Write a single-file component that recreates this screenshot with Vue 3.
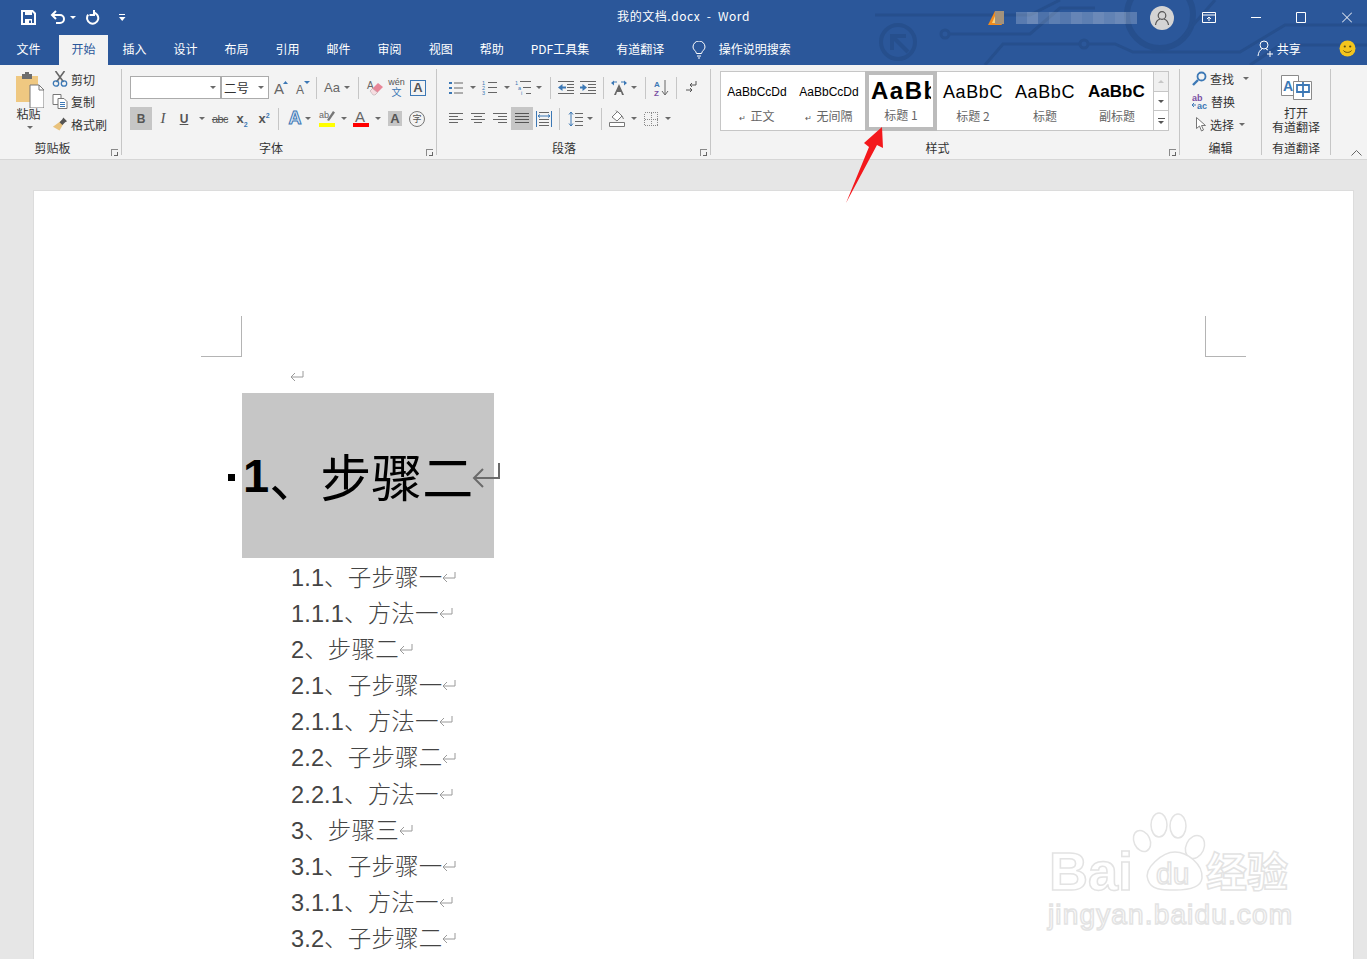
<script setup>
const tabs = ['插入', '设计', '布局', '引用', '邮件', '审阅', '视图', '帮助', 'PDF工具集', '有道翻译']
const lines = ['1.1、子步骤一', '1.1.1、方法一', '2、步骤二', '2.1、子步骤一', '2.1.1、方法一', '2.2、子步骤二', '2.2.1、方法一', '3、步骤三', '3.1、子步骤一', '3.1.1、方法一', '3.2、子步骤二']
const mosaic = [0.22, 0.3, 0.16, 0.24, 0.2, 0.28, 0.24, 0.3, 0.26, 0.3, 0.22]
</script>

<template>
  <div class="app">
    <header class="top">
      <svg class="circuit" width="1367" height="65" viewBox="0 0 1367 65" fill="none" stroke="#264f8d" stroke-width="3">
        <path d="M875 15H1030L1060 0" />
        <circle cx="898" cy="42" r="17" stroke-width="4" />
        <path d="M892 50V36H906M892 36L908 52" stroke-width="4" />
        <circle cx="945" cy="34" r="4" />
        <path d="M949 34H1030L1060 8H1095" />
        <path d="M985 65L1003 44H1080" />
        <circle cx="1084" cy="44" r="4" />
        <path d="M1088 44H1115L1133 52H1240L1285 25H1367" />
        <circle cx="1160" cy="15" r="33" stroke-width="6" />
        <path d="M1180 40L1215 0M1250 65L1280 45H1367" />
      </svg>
      <div class="title-row">
        <div class="qat">
          <svg width="15" height="15" viewBox="0 0 15 15"><path d="M1 1h10.500L14 3.500V14H1z" fill="none" stroke="#fff" stroke-width="2" /><path d="M4 1h7v4H4zM4 9h7v5H4z" fill="#fff" /><path d="M8 10.500h2v2.500H8z" fill="#2b579a" /></svg>
          <svg class="m14" width="16" height="15" viewBox="0 0 16 15" fill="none" stroke="#fff" stroke-width="2"><path d="M2 5h8a4 4 0 0 1 0 8H6" /><path d="M6 1L2 5l4 4" /></svg>
          <i class="caret white m4"></i>
          <svg class="m10" width="15" height="15" viewBox="0 0 15 15" fill="none" stroke="#fff" stroke-width="2"><path d="M7 2.500a5.600 5.600 0 1 1-4.800 2.200" /><path d="M8 0v5H3.500" /></svg>
          <svg class="m18" width="7" height="8" viewBox="0 0 7 8" fill="#fff"><path d="M0 0h6v1H0zM0 3h6.500L3.200 7z" /></svg>
        </div>
        <div class="doc-title">我的文档.docx&nbsp; -&nbsp; Word</div>
        <div class="win">
          <svg width="16" height="16" viewBox="0 0 16 16"><path d="M8 1L15 15H1z" fill="#f08a1d" /><path d="M8 6L11 13H5z" fill="#f9d27a" /></svg>
          <i class="warm"></i>
          <div class="mosaic"><i v-for="(m, i) in mosaic" :key="i" :style="{ opacity: m }"></i></div>
          <div class="avatar">
            <svg width="16" height="16" viewBox="0 0 16 16" fill="none" stroke="#555" stroke-width="1.200"><circle cx="8" cy="5.500" r="3.800" /><path d="M1.500 15c.5-4 3-5.500 4.500-6M14.500 15c-.5-4-3-5.500-4.500-6" /></svg>
          </div>
          <svg class="m28" width="14" height="11" viewBox="0 0 14 11" fill="none" stroke="#fff"><path d="M.5.500h13v10H.5zM.5 3h13M7 9V5M5 7l2-2 2 2" /></svg>
          <svg class="m35" width="10" height="11" viewBox="0 0 10 11" stroke="#fff"><path d="M0 5.500h10" /></svg>
          <svg class="m35" width="10" height="11" viewBox="0 0 10 11" fill="none" stroke="#fff"><path d="M.5.500h9v10h-9z" /></svg>
          <svg class="m36" width="10" height="11" viewBox="0 0 10 11" fill="none" stroke="#fff"><path d="M0 .500l10 10M10 .500l-10 10" /></svg>
        </div>
      </div>
      <nav class="tab-row">
        <span class="tab">文件</span>
        <span class="tab active">开始</span>
        <span v-for="t in tabs" :key="t" class="tab">{{ t }}</span>
        <svg class="bulb" width="14" height="18" viewBox="0 0 14 18" fill="none" stroke="#fff"><path d="M4.500 12.500C4 9.500 1 9 1 6a6 6 0 0 1 12 0c0 3-3 3.500-3.500 6.500zM5 15h4M6 17h2" /></svg>
        <span class="search">操作说明搜索</span>
        <span class="share">
          <svg width="17" height="17" viewBox="0 0 17 17" fill="none" stroke="#fff"><circle cx="7" cy="5" r="4" /><path d="M1 16c.5-4 2-6 4-7M9 9l2 1M10 14h6M13 11v6" /></svg>
          共享
        </span>
        <svg class="smile" width="17" height="17" viewBox="0 0 17 17"><circle cx="8.500" cy="8.500" r="8" fill="#f4c51d" /><circle cx="5.800" cy="6.500" r="1.100" fill="#5b4a10" /><circle cx="11.200" cy="6.500" r="1.100" fill="#5b4a10" /><path d="M4.500 10.500c1.500 2.500 6.500 2.500 8 0" fill="none" stroke="#5b4a10" /></svg>
      </nav>
    </header>

    <section class="ribbon">
      <div class="group g-clip">
        <div class="body clip-body">
          <div class="paste">
            <svg width="29" height="36" viewBox="0 0 29 36"><path d="M1 4h22v26H1z" fill="#efc881" /><path d="M7 2h10v5H7z" fill="#6d6d6d" /><path d="M10 0h4v3h-4z" fill="#6d6d6d" /><path d="M15 13h9l5 5v18H15z" fill="#fff" stroke="#777" /><path d="M24 13v5h5" fill="none" stroke="#777" /></svg>
            <span class="paste-text">粘贴</span>
            <i class="caret"></i>
          </div>
          <div class="small-col">
            <div class="small">
              <svg width="15" height="16" viewBox="0 0 15 16" fill="none"><path d="M3 0l8 11M12 0L4 11" stroke="#666" stroke-width="1.600" /><circle cx="3.500" cy="12.500" r="2.700" stroke="#3c78b5" stroke-width="1.300" /><circle cx="11.500" cy="12.500" r="2.700" stroke="#3c78b5" stroke-width="1.300" /></svg>
              <span>剪切</span>
            </div>
            <div class="small">
              <svg width="15" height="15" viewBox="0 0 15 15" fill="#fff" stroke="#777"><path d="M.5.500h8v10h-8z" /><path d="M5.500 4.500h6l3 3v7h-9z" /><path d="M7.500 8.500h5M7.500 10.500h5M7.500 12.500h5" stroke="#3c78b5" /></svg>
              <span>复制</span>
            </div>
            <div class="small">
              <svg width="17" height="15" viewBox="0 0 17 15"><path d="M9 4l3 3-4 7-7-4z" fill="#e9c27c" /><path d="M8 5l3-3 1-2 4 4-2 1-3 3z" fill="#555" /></svg>
              <span>格式刷</span>
            </div>
          </div>
        </div>
        <div class="label">剪贴板<i class="launch"></i></div>
      </div>

      <div class="group g-font">
        <div class="body stack">
          <div class="row">
            <div class="combo font-name"><i class="caret"></i></div>
            <div class="combo font-size"><span>二号</span><i class="caret"></i></div>
            <svg class="m5 vis" width="15" height="16" viewBox="0 0 15 16"><text x="0" y="14" class="icn-t big">A</text><path d="M9 4l2.500-3L14 4z" fill="#3c78b5" /></svg>
            <svg class="m7 vis" width="15" height="16" viewBox="0 0 15 16"><text x="0" y="14" class="icn-t mid">A</text><path d="M8 1h6l-3 3z" fill="#3c78b5" /></svg>
            <i class="vdiv m5"></i>
            <span class="aa m7">Aa</span>
            <i class="caret m2"></i>
            <i class="vdiv m8"></i>
            <svg class="m8 vis" width="16" height="16" viewBox="0 0 16 16"><text x="0" y="9" class="icn-t eras">A</text><path d="M3 11L11 3l5 4-8 8z" fill="#e88698" /><path d="M3 11l2.500-2.500 5 4L8 15H6z" fill="#f7dde1" stroke="#aaa" stroke-width=".5" /></svg>
            <span class="wen m5"><small>wén</small><b>文</b></span>
            <span class="abox m5">A</span>
          </div>
          <div class="row">
            <span class="press bold">B</span>
            <span class="fmt italic m4">I</span>
            <span class="fmt under m7">U</span>
            <i class="caret m8"></i>
            <span class="fmt strike m6">abc</span>
            <span class="fmt script m6">x<sub>2</sub></span>
            <span class="fmt script m8">x<sup>2</sup></span>
            <i class="vdiv m7"></i>
            <span class="effect m8">A</span>
            <i class="caret m2"></i>
            <svg class="m8 vis" width="16" height="19" viewBox="0 0 16 19"><path d="M8 11L14 2l2 1.500L10 12z" fill="#777" /><text x="0" y="9" class="icn-t tiny2">ab</text><path d="M0 14h16v4H0z" fill="#ff0" /></svg>
            <i class="caret m6"></i>
            <svg class="m6 vis" width="16" height="19" viewBox="0 0 16 19"><text x="2" y="13" class="icn-t big">A</text><path d="M0 14h16v4H0z" fill="#f00" /></svg>
            <i class="caret m6"></i>
            <span class="shade m7">A</span>
            <span class="circled m7">字</span>
          </div>
        </div>
        <div class="label">字体<i class="launch"></i></div>
      </div>

      <div class="group g-para">
        <div class="body stack">
          <div class="row">
            <svg width="14" height="14" viewBox="0 0 14 14" stroke="#666"><path d="M5 2h9M5 7h9M5 12h9" /><path d="M0 1h3v2H0zM0 6h3v2H0zM0 11h3v2H0z" fill="#3c78b5" stroke="none" /></svg>
            <i class="caret m7"></i>
            <svg class="m6 vis" width="15" height="15" viewBox="0 0 15 15" stroke="#666"><path d="M6 2.500h9M6 7.500h9M6 12.500h9" /><text x="0" y="5" class="num">1</text><text x="0" y="10" class="num">2</text><text x="0" y="15" class="num">3</text></svg>
            <i class="caret m7"></i>
            <svg class="m5 vis" width="16" height="16" viewBox="0 0 16 16" stroke="#666"><path d="M5 1.500h11M8 7.500h8M11 13.500h5" /><text x="0" y="5" class="num">1</text><text x="3" y="10" class="num">a</text><text x="6" y="15" class="num">i</text></svg>
            <i class="caret m5"></i>
            <i class="vdiv m8"></i>
            <svg class="m7" width="16" height="14" viewBox="0 0 16 14" stroke="#666"><path d="M0 .500h16M9 3.500h7M9 6.500h7M9 9.500h7M0 12.500h16" /><path d="M0 6.500L4.500 3v7z" fill="#3c78b5" stroke="none" /><path d="M4 5.500h4v2H4z" fill="#3c78b5" stroke="none" /></svg>
            <svg class="m6" width="16" height="14" viewBox="0 0 16 14" stroke="#666"><path d="M0 .500h16M8 3.500h8M8 6.500h8M8 9.500h8M0 12.500h16" /><path d="M7 6.500L2.500 3v7z" fill="#3c78b5" stroke="none" /><path d="M0 5.500h3v2H0z" fill="#3c78b5" stroke="none" /></svg>
            <i class="vdiv m7"></i>
            <svg class="m7" width="16" height="15" viewBox="0 0 16 15"><path d="M3 15L8 4l5 11h-2l-1-3H6l-1 3z" fill="#666" /><path d="M0 3l3-2.500v5zM16 3l-3-2.500v5z" fill="#3c78b5" /><path d="M3 2h3M10 2h3" stroke="#3c78b5" /></svg>
            <i class="caret m4"></i>
            <i class="vdiv m8"></i>
            <svg class="m8 vis" width="14" height="16" viewBox="0 0 14 16"><text x="0" y="7" class="az a">A</text><text x="0" y="16" class="az z">Z</text><path d="M11 0v14M8 11l3 4 3-4" fill="none" stroke="#666" /></svg>
            <i class="vdiv m8"></i>
            <svg class="m9" width="11" height="13" viewBox="0 0 11 13" fill="none" stroke="#555"><path d="M10 0v4H4M6 2L4 4l2 2M0 9h6M4 7l2 2-2 2" /></svg>
          </div>
          <div class="row">
            <svg width="14" height="13" viewBox="0 0 14 13" stroke="#666"><path d="M0 1.500h14M0 4.500h9M0 7.500h14M0 10.500h9" /></svg>
            <svg class="m8" width="14" height="13" viewBox="0 0 14 13" stroke="#666"><path d="M0 1.500h14M3 4.500h8M0 7.500h14M3 10.500h8" /></svg>
            <svg class="m8" width="14" height="13" viewBox="0 0 14 13" stroke="#666"><path d="M0 1.500h14M5 4.500h9M0 7.500h14M5 10.500h9" /></svg>
            <span class="press m4">
              <svg width="14" height="13" viewBox="0 0 14 13" stroke="#555"><path d="M0 1.500h14M0 4.500h14M0 7.500h14M0 10.500h14" /></svg>
            </span>
            <svg class="m3" width="16" height="16" viewBox="0 0 16 16" fill="none" stroke="#666"><path d="M.500 0v16M15.500 0v16" stroke="#3c78b5" /><path d="M3 1.500h10M3 8.500h10M3 11.500h10M3 14.500h10" /><path d="M2 5h12M4 3.500L2 5l2 1.500M12 3.500L14 5l-2 1.500" stroke="#3c78b5" /></svg>
            <i class="vdiv m7"></i>
            <svg class="m8" width="15" height="16" viewBox="0 0 15 16" fill="none" stroke="#666"><path d="M7 2.500h8M7 6.500h8M7 10.500h8M7 14.500h8" /><path d="M3 1v14M1 3.500L3 1l2 2.500M1 12.500L3 15l2-2.500" stroke="#3c78b5" /></svg>
            <i class="caret m4"></i>
            <i class="vdiv m8"></i>
            <svg class="m7" width="16" height="17" viewBox="0 0 16 17" fill="none" stroke="#777"><path d="M3 7l5.500-5.500 4.500 4.500L8 11z" fill="#fff" /><path d="M7 .500l2 2M13 6l1.500 3" /><path d="M.500 12.500h15v4H.500z" fill="#fff" /></svg>
            <i class="caret m6"></i>
            <svg class="m7" width="14" height="14" viewBox="0 0 14 14" fill="none" stroke="#8a8a8a" stroke-dasharray="1 1" shape-rendering="crispEdges"><path d="M.500.500h13v13H.500zM7.500.500v13M.500 7.500h13" /></svg>
            <i class="caret m7"></i>
          </div>
        </div>
        <div class="label">段落<i class="launch"></i></div>
      </div>

      <div class="group g-style">
        <div class="body gallery-wrap">
          <div class="gallery">
            <div class="st"><span class="s-sample s-normal">AaBbCcDd</span><span class="s-name"><em>↵</em>正文</span></div>
            <div class="st"><span class="s-sample s-normal">AaBbCcDd</span><span class="s-name"><em>↵</em>无间隔</span></div>
            <div class="st sel"><span class="s-sample s-h1">AaBb</span><span class="s-name">标题 1</span></div>
            <div class="st"><span class="s-sample s-h2">AaBbC</span><span class="s-name">标题 2</span></div>
            <div class="st"><span class="s-sample s-h2">AaBbC</span><span class="s-name">标题</span></div>
            <div class="st"><span class="s-sample s-sub">AaBbC</span><span class="s-name">副标题</span></div>
            <div class="scroller">
              <span class="up"><i class="caret-up"></i></span>
              <span><i class="caret dark"></i></span>
              <span class="more"><i class="bar"></i><i class="caret dark"></i></span>
            </div>
          </div>
        </div>
        <div class="label">样式<i class="launch"></i></div>
      </div>

      <div class="group g-edit">
        <div class="body edit-col">
          <div class="small">
            <svg width="15" height="15" viewBox="0 0 15 15" fill="none"><circle cx="9.500" cy="5.500" r="4" stroke="#3c78b5" stroke-width="1.800" /><path d="M6 9l-5 5" stroke="#3c78b5" stroke-width="2.400" /></svg>
            <span>查找</span><i class="caret m6"></i>
          </div>
          <div class="small">
            <svg class="vis" width="16" height="15" viewBox="0 0 16 15"><text x="0" y="7" class="rep ab">ab</text><text x="5" y="15" class="rep ac">ac</text><path d="M0 11h4M2 9l-2 2 2 2" fill="none" stroke="#3c78b5" /></svg>
            <span>替换</span>
          </div>
          <div class="small pick">
            <svg width="11" height="15" viewBox="0 0 11 15"><path d="M.500.500v11l3-2.500 2 5 2-1-2-4.500h4z" fill="#fff" stroke="#777" /></svg>
            <span>选择</span><i class="caret m2"></i>
          </div>
        </div>
        <div class="label">编辑</div>
      </div>

      <div class="group g-you">
        <div class="body you-body">
          <svg width="31" height="26" viewBox="0 0 31 26"><path d="M.500.500h17v20H.500z" fill="#fff" stroke="#8a8a8a" /><path d="M12.500 6.500h18v18h-18z" fill="#fff" stroke="#8a8a8a" /><text x="2" y="16" class="you-a">A</text><path d="M16 10h12v7H16zM22 7v15" fill="none" stroke="#3c78b5" stroke-width="1.800" /></svg>
          <span>打开</span>
          <span>有道翻译</span>
        </div>
        <div class="label">有道翻译</div>
      </div>
      <svg class="collapse" width="11" height="6" viewBox="0 0 11 6" fill="none" stroke="#666"><path d="M.500 5.500l5-5 5 5" /></svg>
    </section>

    <main class="workspace">
      <article class="page">
        <div class="crops"><i class="crop left"></i><i class="crop right"></i></div>
        <svg class="ret first" width="14" height="12" viewBox="0 0 14 12" fill="none" stroke="#9a9a9a"><path d="M13 0v6H1M5 2L1 6l4 4" /></svg>
        <div class="heading-line">
          <i class="mark"></i>
          <div class="heading-box">
            <span class="h-num">1</span><span class="h-cjk">、步骤二</span>
            <svg class="h-ret" width="28" height="27" viewBox="0 0 28 27" fill="none" stroke="#6b6b6b" stroke-width="2"><path d="M27 0v15H2M11 6l-9 9 9 9" /></svg>
          </div>
        </div>
        <div class="list">
          <div v-for="(l, i) in lines" :key="i" class="li">{{ l }}<svg width="14" height="12" viewBox="0 0 14 12" fill="none" stroke="#9a9a9a"><path d="M13 0v6H1M5 2L1 6l4 4" /></svg></div>
        </div>
      </article>
      <svg class="watermark" width="260" height="130" viewBox="1040 805 260 130" fill="#fff" stroke="#e3e3e3" stroke-width="1.500">
        <ellipse cx="1142" cy="841" rx="8" ry="11" transform="rotate(-25 1142 841)" />
        <ellipse cx="1159" cy="825" rx="8" ry="12" />
        <ellipse cx="1178" cy="826" rx="8" ry="12" />
        <ellipse cx="1195" cy="847" rx="9" ry="12" transform="rotate(25 1195 847)" />
        <path d="M1148 880c-5-12 15-28 27-28s28 12 27 26c-1 10-14 12-27 12s-24 0-27-10z" />
        <text x="1049" y="890" class="wm-bai">Bai</text>
        <text x="1156" y="884" class="wm-du">du</text>
        <text x="1206" y="887" class="wm-cn">经验</text>
        <text x="1048" y="924" class="wm-url" textLength="244">jingyan.baidu.com</text>
      </svg>
    </main>

    <svg class="arrow" width="40" height="80" viewBox="845 125 40 80"><path d="M846 203L869 147L864 143L882 127L883 148L877 145Z" fill="#f3181c" /></svg>
  </div>
</template>

<style>
html, body { margin: 0; padding: 0; }
</style>

<style scoped>
.app {
  position: relative;
  width: 1367px;
  height: 959px;
  overflow: hidden;
  background: #e6e6e6;
  font-family: "Noto Sans CJK SC", "Liberation Sans", sans-serif;
  font-size: 12px;
  color: #333;
}
i { display: block; font-style: normal; flex: none; }
svg { display: block; flex: none; }
.vis { overflow: visible; }

.m2 { margin-left: 2px; } .m3 { margin-left: 3px; } .m4 { margin-left: 4px; }
.m5 { margin-left: 5px; } .m6 { margin-left: 6px; } .m7 { margin-left: 7px; }
.m8 { margin-left: 8px; } .m9 { margin-left: 9px; } .m10 { margin-left: 10px; }
.m14 { margin-left: 14px; } .m18 { margin-left: 18px; } .m28 { margin-left: 28px; }
.m35 { margin-left: 35px; } .m36 { margin-left: 36px; }

.caret { width: 0; height: 0; border-style: solid; border-width: 3px 3px 0; border-color: #6a6a6a transparent transparent; }
.caret.white { border-top-color: #fff; }
.caret.dark { border-top-color: #555; }
.vdiv { width: 1px; height: 22px; background: #c6c6c6; }

/* Top */
.top { position: relative; height: 65px; background: #2b579a; color: #fff; overflow: hidden; }
.circuit { position: absolute; left: 0; top: 0; }
.title-row { position: relative; height: 35px; display: grid; grid-template-columns: 1fr auto 1fr; align-items: center; }
.qat { display: flex; align-items: center; padding-left: 21px; }
.doc-title { font-size: 12px; line-height: 31px; height: 35px; letter-spacing: .55px; }
.win { display: flex; align-items: center; justify-content: flex-end; padding-right: 15px; }
.warm { width: 9px; height: 13px; background: #a3927c; margin-left: -8px; }
.mosaic { display: flex; margin-left: 12px; margin-right: 13px; }
.mosaic i { width: 11px; height: 12px; background: #fff; }
.avatar { width: 24px; height: 24px; border-radius: 50%; background: #d4d4d4; display: flex; align-items: center; justify-content: center; }
.tab-row { position: relative; height: 30px; display: flex; align-items: stretch; padding-left: 3px; }
.tab { padding: 0 13.500px; line-height: 27px; white-space: nowrap; }
.tab.active { background: #f3f3f3; color: #2b579a; margin-left: 5px; padding: 0 12.500px; margin-right: 1px; }
.bulb { margin-left: 14px; margin-top: 6px; }
.search { margin-left: 13px; line-height: 27px; }
.share { display: flex; align-items: center; gap: 3px; margin-left: 466px; height: 27px; }
.smile { margin-left: 38px; margin-top: 5px; }

/* Ribbon */
.ribbon { position: relative; height: 94px; background: #f3f3f3; border-bottom: 1px solid #d6d6d6; display: flex; align-items: flex-start; }
.group { box-sizing: border-box; height: 86px; margin-top: 4px; border-right: 1px solid #c6c6c6; display: flex; flex-direction: column; position: relative; }
.body { height: 72px; box-sizing: border-box; }
.label { height: 14px; line-height: 14px; text-align: center; color: #333; position: relative; padding-top: 1px; }
.g-clip .label { padding-right: 16px; }
.g-font .label { padding-right: 24px; }
.g-para .label { padding-right: 31px; }
.g-style .label { padding-right: 24px; }
.launch { position: absolute; right: 3px; bottom: -1px; width: 6px; height: 6px; border-left: 1px solid #8a8a8a; border-top: 1px solid #8a8a8a; }
.launch::after { content: ""; position: absolute; right: 0; bottom: 0; width: 3px; height: 3px; border-right: 1px solid #666; border-bottom: 1px solid #666; }
.stack { padding-top: 7px; display: flex; flex-direction: column; gap: 8px; }
.row { height: 23px; display: flex; align-items: center; }

.g-clip { width: 122px; }
.clip-body { display: flex; padding-left: 15px; padding-top: 3px; }
.paste { width: 29px; display: flex; flex-direction: column; align-items: center; }
.paste-text { line-height: 14px; margin-top: -1px; margin-left: -2px; }
.paste .caret { margin-top: 5px; }
.small-col { margin-left: 8px; margin-top: -2px; display: flex; flex-direction: column; gap: 4.500px; }
.small-col svg { width: 16px; }
.small { height: 18px; display: flex; align-items: center; gap: 3px; white-space: nowrap; }

.g-font { width: 315px; padding-left: 8px; }
.combo { box-sizing: border-box; height: 23px; border: 1px solid #ababab; background: #fff; display: flex; align-items: center; justify-content: flex-end; padding-right: 4px; }
.font-name { width: 91px; }
.font-size { width: 48px; margin-left: 0; justify-content: space-between; padding-left: 2px; font-size: 12.500px; }
.aa { width: 18px; font: 13px "Liberation Sans", sans-serif; color: #666; }
.wen { width: 17px; display: flex; flex-direction: column; align-items: center; line-height: 10px; font-size: 9px; }
.wen small { font: 9px/9px "Liberation Sans", sans-serif; color: #555; }
.wen b { font-weight: 400; color: #3c78b5; font-size: 10px; line-height: 10px; }
.abox { box-sizing: border-box; width: 16px; height: 16px; border: 1px solid #3c78b5; font: bold 13px/14px "Liberation Sans", sans-serif; color: #555; text-align: center; }
.press { box-sizing: border-box; width: 22px; height: 23px; background: #c6c6c6; display: flex; align-items: center; justify-content: center; }
.bold { font: bold 12px "Liberation Sans", sans-serif; color: #555; }
.fmt { font: 12px "Liberation Sans", sans-serif; color: #555; text-align: center; font-weight: bold; }
.italic { width: 14px; font: italic 15px "Liberation Serif", serif; }
.under { width: 14px; text-decoration: underline; }
.strike { width: 18px; text-decoration: line-through; font-weight: 400; font-size: 11px; letter-spacing: -.5px; }
.script { width: 14px; font-size: 13px; line-height: 14px; }
.script sub, .script sup { font-size: 7px; color: #3c78b5; line-height: 0; }
.effect { width: 16px; font: bold 18px "Liberation Sans", sans-serif; color: #dbe8f5; -webkit-text-stroke: 1px #3c78b5; text-align: center; }
.shade { width: 14px; height: 15px; background: #c6c6c6; color: #555; font: bold 13px/15px "Liberation Sans", sans-serif; text-align: center; }
.circled { box-sizing: border-box; width: 16px; height: 16px; border: 1px solid #777; border-radius: 50%; font-size: 9px; line-height: 13px; text-align: center; color: #555; }

.icn-t { font-family: "Liberation Sans", sans-serif; fill: #666; }
.big { font-size: 15px; }
.mid { font-size: 12px; }
.eras { font-size: 10px; }
.tiny2 { font-size: 9px; }
.num { font: 5.500px "Liberation Sans", sans-serif; fill: #3c78b5; stroke: none; }
.az { font: bold 8px "Liberation Sans", sans-serif; }
.az.a { fill: #3c78b5; }
.az.z { fill: #7a4fa3; }

.g-para { width: 274px; padding-left: 12px; }
.g-style { width: 469px; padding-left: 9px; }
.gallery-wrap { padding-top: 2px; }
.gallery { box-sizing: border-box; width: 449px; height: 60px; border: 1px solid #c6c6c6; background: #fff; display: flex; }
.st { width: 72px; display: flex; flex-direction: column; align-items: center; overflow: hidden; flex: none; box-sizing: border-box; padding-top: 5px; }
.st.sel { margin: -1px 0; height: 60px; width: 72px; border: 4px solid #bcbcbc; background: #fff; padding-top: 1px; }
.s-sample { height: 29px; line-height: 30px; color: #000; font-family: "Liberation Sans", sans-serif; white-space: nowrap; }
.s-normal { font-size: 12px; }
.s-h1 { font-size: 24px; font-weight: bold; letter-spacing: 1.500px; width: 60px; overflow: hidden; }
.s-h2 { font-size: 18px; letter-spacing: .6px; }
.s-sub { font-size: 17px; font-weight: bold; width: 58px; overflow: hidden; }
.s-name { line-height: 20px; color: #666; white-space: nowrap; }
.s-name em { font-style: normal; font-size: 8px; margin-right: 4px; color: #555; }
.scroller { width: 15px; margin-left: auto; display: flex; flex-direction: column; border-left: 1px solid #c6c6c6; }
.scroller span { flex: 1; display: flex; flex-direction: column; align-items: center; justify-content: center; gap: 2px; border-bottom: 1px solid #c6c6c6; }
.scroller .up { background: #f0f0f0; }
.scroller .more { border-bottom: 0; }
.bar { width: 7px; height: 1px; background: #555; }
.caret-up { width: 0; height: 0; border-style: solid; border-width: 0 3px 3px; border-color: transparent transparent #c6c6c6; }

.g-edit { width: 82px; }
.edit-col { padding: 0 0 0 12px; display: flex; flex-direction: column; gap: 5px; }
.pick { padding-left: 4px; }
.rep { font: bold 9px "Liberation Sans", sans-serif; }
.rep.ab { fill: #7a4fa3; }
.rep.ac { fill: #3c78b5; }

.g-you { width: 69px; }
.you-body { display: flex; flex-direction: column; align-items: center; padding-top: 6px; line-height: 14px; }
.you-body svg { margin-bottom: 5px; }
.you-a { font: bold 14px "Liberation Sans", sans-serif; fill: #3c78b5; }
.collapse { position: absolute; right: 5px; top: 85px; }

/* Page */
.workspace { position: relative; height: 800px; padding: 31px 14px 0 34px; box-sizing: border-box; overflow: hidden; }
.page { box-sizing: border-box; height: 780px; background: #fff; padding-top: 125px; box-shadow: 0 0 0 1px #dcdcdc; }
.crops { display: flex; justify-content: space-between; padding: 0 107px 0 167px; }
.crop { width: 40px; height: 40px; border-bottom: 1px solid #b4b4b4; }
.crop.left { border-right: 1px solid #b4b4b4; }
.crop.right { border-left: 1px solid #b4b4b4; }
.ret.first { margin: 14px 0 0 256px; }
.heading-line { display: flex; align-items: center; margin-top: 10px; padding-left: 194px; }
.mark { width: 7px; height: 7px; background: #000; margin-right: 7px; margin-top: 3px; }
.heading-box { position: relative; box-sizing: border-box; width: 252px; height: 165px; background: #c6c6c6; display: flex; align-items: center; padding-left: 1px; white-space: nowrap; color: #000; }
.h-num { font: bold 47px "Liberation Sans", sans-serif; }
.h-cjk { font-size: 51px; line-height: 165px; margin-left: 0; }
.h-ret { position: absolute; left: 230px; top: 70px; }
.list { padding-left: 257px; padding-top: 1.500px; }
.li { height: 36.200px; line-height: 36.200px; font-size: 23.500px; letter-spacing: .15px; font-weight: 300; color: #444; display: flex; align-items: center; font-family: "Liberation Sans", "Noto Sans CJK SC", sans-serif; }
.watermark { position: absolute; left: 1040px; top: 645px; }
.wm-bai { font: bold 54px "Liberation Sans", sans-serif; }
.wm-du { font: 30px "Liberation Sans", sans-serif; }
.wm-cn { font: 700 41px "Noto Sans CJK SC", sans-serif; }
.wm-url { font: 28px "Liberation Sans", sans-serif; }
.arrow { position: absolute; left: 845px; top: 125px; }
</style>
